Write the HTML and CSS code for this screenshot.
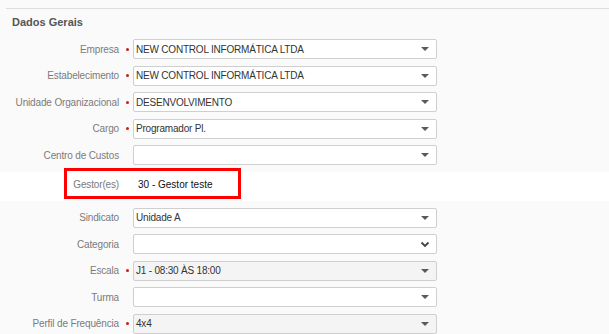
FILE: index.html
```html
<!DOCTYPE html>
<html lang="pt-BR">
<head>
    <meta charset="UTF-8">
    <meta name="viewport" content="width=device-width, initial-scale=1.0">
    <title>Dados Gerais</title>
    <link rel="stylesheet" href="styles.css">
</head>
<body>
    <section class="panel">
        <h2 class="panel-title">Dados Gerais</h2>
        <div class="form">
            <div class="row">
                <label class="row-label">Empresa</label>
                <span class="req"></span>
                <div class="select"><span class="select-text">NEW CONTROL INFORMÁTICA LTDA</span><span class="caret"></span></div>
            </div>
            <div class="row">
                <label class="row-label">Estabelecimento</label>
                <span class="req"></span>
                <div class="select"><span class="select-text">NEW CONTROL INFORMÁTICA LTDA</span><span class="caret"></span></div>
            </div>
            <div class="row">
                <label class="row-label">Unidade Organizacional</label>
                <span class="req"></span>
                <div class="select"><span class="select-text">DESENVOLVIMENTO</span><span class="caret"></span></div>
            </div>
            <div class="row">
                <label class="row-label">Cargo</label>
                <span class="req"></span>
                <div class="select"><span class="select-text">Programador Pl.</span><span class="caret"></span></div>
            </div>
            <div class="row">
                <label class="row-label">Centro de Custos</label>
                <span></span>
                <div class="select"><span class="select-text"></span><span class="caret"></span></div>
            </div>
            <div class="row row-static">
                <label class="row-label">Gestor(es)</label>
                <span></span>
                <span class="static-value">30 - Gestor teste</span>
                <div class="highlight"></div>
            </div>
            <div class="row">
                <label class="row-label">Sindicato</label>
                <span></span>
                <div class="select"><span class="select-text">Unidade A</span><span class="caret"></span></div>
            </div>
            <div class="row">
                <label class="row-label">Categoria</label>
                <span></span>
                <div class="select">
                    <span class="select-text"></span>
                    <svg class="chevron" width="10" height="7" viewBox="0 0 10 7" fill="none" stroke="#444" stroke-width="1.8">
                        <path d="M1.5 1.5l3.5 3.5 3.5-3.5"></path>
                    </svg>
                </div>
            </div>
            <div class="row">
                <label class="row-label">Escala</label>
                <span class="req"></span>
                <div class="select select-locked"><span class="select-text">J1 - 08:30 ÀS 18:00</span><span class="caret"></span></div>
            </div>
            <div class="row">
                <label class="row-label">Turma</label>
                <span></span>
                <div class="select"><span class="select-text"></span><span class="caret"></span></div>
            </div>
            <div class="row">
                <label class="row-label">Perfil de Frequência</label>
                <span class="req"></span>
                <div class="select select-locked"><span class="select-text">4x4</span><span class="caret"></span></div>
            </div>
        </div>
    </section>
</body>
</html>
```

FILE: styles.css
```css
body, html {
    margin: 0;
    padding: 0;
    height: 100%;
    background-color: #fafafa;
    font-family: "Liberation Sans", Arial, sans-serif;
    overflow: hidden;
}
.panel {
    margin: 8px 0 0 6px;
    border-top: 1px solid #dedede;
    padding-top: 6px;
}
.panel-title {
    margin: 0 0 10px 6px;
    font-size: 11px;
    line-height: 14px;
    font-weight: bold;
    color: #555;
}
.form {
    display: flex;
    flex-direction: column;
    gap: 6.6px;
}
.row {
    display: grid;
    grid-template-columns: 113px 14px 304px;
    align-items: center;
    height: 20px;
    position: relative;
}
.row-label {
    text-align: right;
    font-size: 10px;
    letter-spacing: -0.15px;
    color: #7a7a7a;
    white-space: nowrap;
}
.req {
    width: 3px;
    height: 3px;
    margin-left: 7px;
    border-radius: 50%;
    background-color: #d01818;
}
.select {
    box-sizing: border-box;
    height: 20px;
    display: flex;
    align-items: center;
    padding: 0 7px 0 2px;
    background-color: #fff;
    border: 1px solid #cfcfcf;
    border-radius: 2px;
}
.select-locked {
    background-color: #f4f4f4;
}
.select-text {
    flex: 1;
    font-size: 10px;
    letter-spacing: -0.2px;
    color: #333;
    white-space: nowrap;
}
.caret {
    width: 0;
    height: 0;
    border-left: 4px solid transparent;
    border-right: 4px solid transparent;
    border-top: 4px solid #5a5a5a;
}
.chevron {
    display: block;
    margin-right: -1px;
}
.row-static {
    height: 29px;
    align-items: start;
    padding-top: 6px;
    margin-left: -6px;
    padding-left: 6px;
    box-sizing: border-box;
    grid-template-columns: 113px 14px 304px;
    background-color: #fff;
}
.row-static .row-label {
    line-height: 14px;
}
.static-value {
    padding-left: 5px;
    font-size: 10px;
    line-height: 14px;
    color: #111;
}
.highlight {
    position: absolute;
    top: -4px;
    left: 64px;
    width: 177px;
    height: 31px;
    box-sizing: border-box;
    border: 3px solid #f00;
    pointer-events: none;
}
```
